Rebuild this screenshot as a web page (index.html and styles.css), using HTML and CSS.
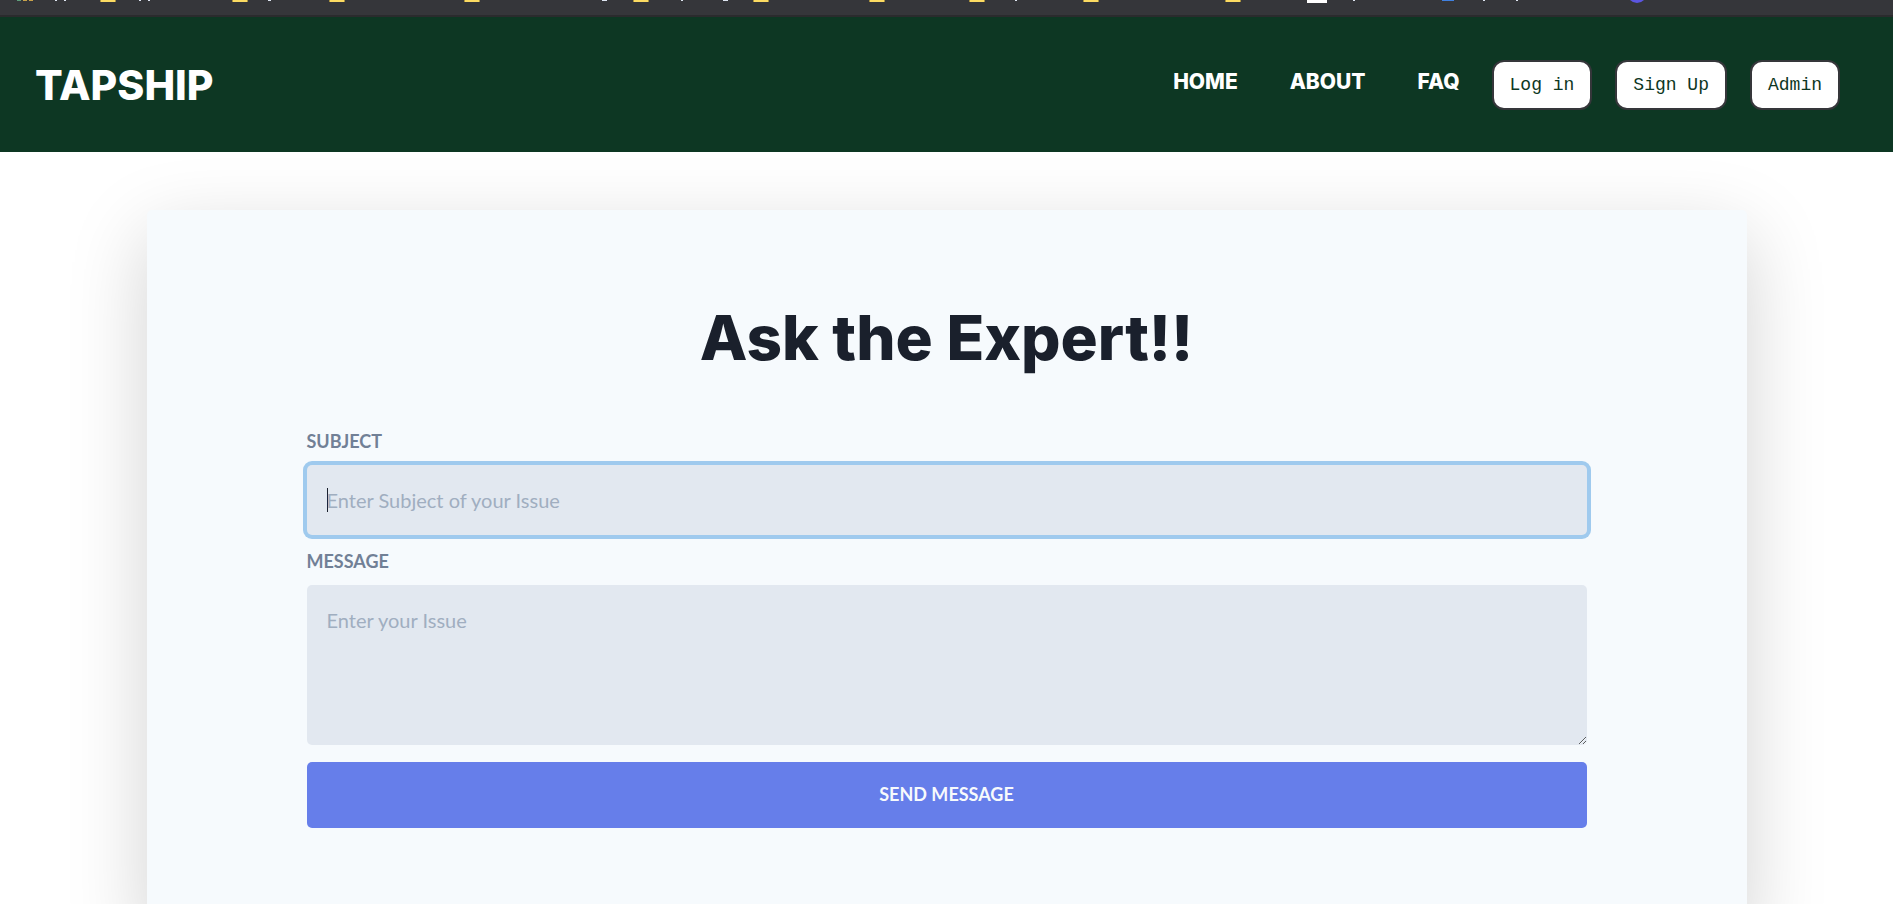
FILE: index.html
```html
<!DOCTYPE html>
<html lang="en">
<head>
<meta charset="utf-8">
<title>Tapship</title>
<link rel="stylesheet" href="styles.css">
</head>
<body>
<div class="bookmarks" aria-hidden="true">
  <svg width="1893" height="15" viewBox="0 0 1893 15">
    <path fill="#5f9f7c" d="M17 0h4v1h-4z"/>
    <path fill="#c9a24a" d="M23 0h4v1h-4zM29 0h4v1h-4z"/>
    <path fill="#a8913f" d="M100 0h16v2h-16zM232 0h16v2h-16zM329 0h16v2h-16zM464 0h16v2h-16zM633 0h16v2h-16zM753 0h16v2h-16zM869 0h16v2h-16zM969 0h16v2h-16zM1083 0h16v2h-16zM1225 0h16v2h-16z"/>
    <path fill="#fbdb62" d="M101 0h14v2h-14zM233 0h14v2h-14zM330 0h14v2h-14zM465 0h14v2h-14zM634 0h14v2h-14zM754 0h14v2h-14zM870 0h14v2h-14zM970 0h14v2h-14zM1084 0h14v2h-14zM1226 0h14v2h-14z"/>
    <path fill="#dfe6f2" d="M55 0h2v1h-2zM64 0h2v1h-2zM139 0h2v1h-2zM148 0h2v1h-2zM268 0h3v1h-3zM602 0h5v1h-5zM681 0h2v1h-2zM723 0h5v1h-5zM1015 0h2v1h-2zM1353 0h2v1h-2zM1483 0h2v1h-2zM1516 0h2v1h-2z"/>
    <path fill="#fff" d="M1307 0h20v3h-20z"/>
    <path fill="#4080e0" d="M1442 0h12v1h-12z"/>
    <path fill="#5b55e0" d="M1630 0h14q-3 3-7 3t-7-3z"/>
  </svg>
</div>
<header class="header">
  <a class="logo" href="#">TAPSHIP</a>
  <nav class="nav">
    <a class="nav-link" href="#">HOME</a>
    <a class="nav-link" href="#">ABOUT</a>
    <a class="nav-link" href="#">FAQ</a>
    <div class="actions">
      <button class="pill" type="button">Log in</button>
      <button class="pill" type="button">Sign Up</button>
      <button class="pill" type="button">Admin</button>
    </div>
  </nav>
</header>
<main class="card">
  <h1 class="title">Ask the Expert!!</h1>
  <form class="form">
    <label class="label" for="subject">SUBJECT</label>
    <input class="field" id="subject" type="text" placeholder="Enter Subject of your Issue" autofocus>
    <label class="label" for="message">MESSAGE</label>
    <textarea class="field message" id="message" placeholder="Enter your Issue"></textarea>
    <button class="send" type="button">SEND MESSAGE</button>
  </form>
</main>
</body>
</html>
```
FILE: styles.css
```css
* { box-sizing: border-box; }
html { overflow-x: hidden; scrollbar-width: none; }
body {
  margin: 0;
  background: #fff;
  color: #1a202c;
  font-family: Lato, sans-serif;
  font-size: 20px;
  line-height: 30px;
}
.bookmarks {
  height: 17px;
  overflow: hidden;
  background: #35363a;
  border-bottom: 2px solid #2a2b2d;
}
.bookmarks svg { display: block; }
.header {
  display: flex;
  align-items: center;
  justify-content: space-between;
  min-height: 135px;
  padding: 0 53px 0 35px;
  background: #0d3723;
}
.logo {
  color: #fff;
  font: 800 41px/50px Inter, sans-serif;
  text-decoration: none;
}
.nav {
  display: flex;
  align-items: center;
  gap: 52px;
}
.nav-link {
  padding-bottom: 6px;
  color: #fff;
  font: 800 21px/30px Inter, sans-serif;
  text-decoration: none;
}
.actions {
  display: flex;
  gap: 23px;
  margin-left: -20px;
}
.pill {
  height: 50px;
  padding: 0 16px;
  border: 2px solid #35363a;
  border-radius: 12px;
  background: #fff;
  color: #0d3723;
  font: 18px/24px "Liberation Mono", monospace;
}
.card {
  width: calc(100% - 293px);
  margin: 58px auto 0;
  padding: 90px 160px 100px;
  border-radius: 5px;
  background: #f6fafd;
  box-shadow: 0 25px 80px rgba(0, 0, 0, 0.18);
}
.title {
  margin: 0 0 50px;
  font: 800 62px/76px Inter, sans-serif;
  text-align: center;
}
.form {
  display: flex;
  flex-direction: column;
}
.label {
  margin-bottom: 9px;
  color: #718096;
  font-size: 18px;
  font-weight: 700;
}
.field {
  width: 100%;
  height: 70px;
  margin-bottom: 11px;
  padding: 20px;
  border: 0;
  border-radius: 5px;
  background: #e2e8f0;
  color: #1a202c;
  font: 20px/30px Lato, sans-serif;
}
.field::placeholder { color: #a0aec0; opacity: 1; }
.field:focus {
  outline: 0;
  box-shadow: 0 0 0 4px #9fcaee;
}
/* Steady insertion bar while the focused field is empty */
.field:focus:placeholder-shown {
  background: linear-gradient(#1a202c, #1a202c) 20px center / 1px 24px no-repeat #e2e8f0;
  caret-color: transparent;
}
.message {
  height: 160px;
  margin-bottom: 17px;
  resize: vertical;
}
.send {
  height: 66px;
  padding: 0 0 2px;
  border: 0;
  border-radius: 5px;
  background: #667eea;
  color: #f7fafc;
  font: 700 18px/30px Lato, sans-serif;
}
```
